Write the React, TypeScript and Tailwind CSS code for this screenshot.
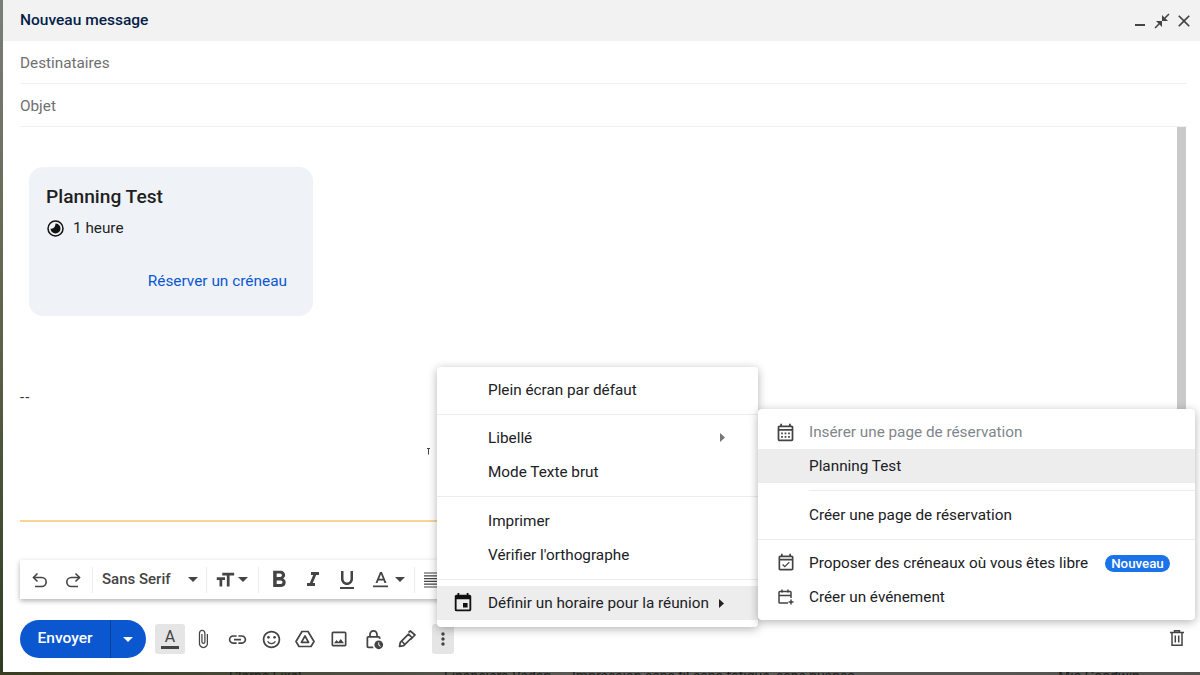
import {
  MdFormatSize, MdFormatBold, MdFormatItalic, MdFormatUnderlined,
  MdAttachFile, MdLink, MdOutlineSentimentSatisfied, MdOutlineImage, MdOutlineLockClock,
  MdMoreVert, MdEvent, MdOutlineCalendarMonth, MdOutlineEventAvailable,
  MdClose, MdCloseFullscreen,
} from 'react-icons/md'

const FONT = "font-['Roboto','Liberation_Sans',sans-serif]"

function Caret({ className = '' }: { className?: string }) {
  return (
    <svg width="10" height="5" viewBox="0 0 10 5" className={className}>
      <path d="M0 0h10L5 5z" fill="currentColor" />
    </svg>
  )
}

function Sep() {
  return <div className="w-px h-[26px] bg-[#ececec]" />
}

function UndoIcon({ flip = false, className = '' }: { flip?: boolean; className?: string }) {
  return (
    <svg width="18" height="18" viewBox="0 0 18 18" fill="none" stroke="#444" strokeWidth="1.600" className={`${flip ? '-scale-x-100' : ''} ${className}`}>
      <path d="M6.500 2.500L2.500 6.500l4 4" />
      <path d="M2.500 6.500h8.200a4.500 4.500 0 0 1 0 9H4" />
    </svg>
  )
}

function DriveIcon() {
  return (
    <svg width="20" height="20" viewBox="0 0 20 20" fill="none" stroke="#444" strokeWidth="1.700" strokeLinejoin="round">
      <path d="M7 2.500h6l6 10-3 5H4l-3-5z" />
      <path d="M10 7l3.600 6.300H6.400z" />
    </svg>
  )
}

function PenIcon() {
  return (
    <svg width="20" height="20" viewBox="0 0 20 20" fill="none" stroke="#444" strokeWidth="1.700" strokeLinejoin="round">
      <path d="M2.500 17.500l.8-4.200 8.200-8.200 3.400 3.400-8.200 8.200z" />
      <path d="M11.500 3.500l1.800-1.500 4.700 4-4.500 4.500" />
      <path d="M5 12.500l2.500 2.500" />
    </svg>
  )
}

function TrashIcon({ className = '' }: { className?: string }) {
  return (
    <svg width="14" height="16" viewBox="0 0 14 16" fill="none" stroke="#444" strokeWidth="1.500" className={className}>
      <path d="M0 2.500h14M4.500 2.500V.8h5v1.700" />
      <path d="M2 2.500v12.700h10V2.500" />
      <path d="M5.300 5.500v7M8.700 5.500v7" />
    </svg>
  )
}

function CalendarPlus() {
  return (
    <svg width="18" height="18" viewBox="0 0 18 18" fill="none" stroke="#444" strokeWidth="1.500">
      <path d="M11 15H2.800A.8.8 0 0 1 2 14.200V4.300a.8.8 0 0 1 .8-.8h10.400a.8.8 0 0 1 .8.8V10" />
      <path d="M2 7.500h12M5 1.500v3M11 1.500v3M14 11.500v5M11.500 14h5" />
    </svg>
  )
}

function ClockHalf() {
  return (
    <svg width="17" height="17" viewBox="0 0 17 17">
      <circle cx="8.500" cy="8.500" r="7.500" fill="none" stroke="#111" strokeWidth="1.500" />
      <path d="M8.500 3.500a5 5 0 1 1-5 5c2.500 1 5-1.500 5-5z" fill="#111" />
    </svg>
  )
}

function MenuRow({ icon, label, right, active = false, muted = false, iconClass = '' }: {
  icon?: React.ReactNode; label: string; right?: React.ReactNode; active?: boolean; muted?: boolean; iconClass?: string
}) {
  return (
    <div className={`h-[34px] flex items-center ${active ? 'bg-[#ededed]' : ''}`}>
      <div className={`w-[51px] flex justify-center shrink-0 ${iconClass}`}>{icon}</div>
      <span className={`text-[15.3px] whitespace-nowrap ${muted ? 'text-[#80868b]' : 'text-[#202124]'}`}>{label}</span>
      {right}
    </div>
  )
}

const TOOLS = [
  <MdAttachFile size={20} key="attach" />,
  <MdLink size={21} key="link" />,
  <MdOutlineSentimentSatisfied size={21} key="emoji" />,
  <DriveIcon key="drive" />,
  <MdOutlineImage size={20} key="image" />,
  <MdOutlineLockClock size={21} key="lock" />,
  <PenIcon key="pen" />,
]

export default function App() {
  return (
    <div className={`${FONT} relative w-[1200px] h-[675px] overflow-hidden bg-gradient-to-b from-[#7b7d7a] via-[#5f6248] to-[#2f3b26]`}>
      {/* inbox row behind the dialog: only the tops of the letters show, the words are placeholders */}
      <div className="absolute left-0 right-0 top-[672px] h-[3px] bg-gradient-to-r from-[#3a3d22] via-[#5b5a56] to-[#55534f] overflow-hidden text-[14px] leading-[14px] text-[#222]">
        <span className="absolute left-[229px] top-[-3px]">Clarne Fixel</span>
        <span className="absolute left-[444px] top-[-3px]">Financiera Vedan</span>
        <span className="absolute left-[572px] top-[-3px] whitespace-nowrap">Impression sans fil sans fatigue, sans nuance</span>
        <span className="absolute left-[1058px] top-[-3px]">Mia Goodwin</span>
      </div>

      <div className="ml-[3px] w-[1197px] h-[672px] bg-white rounded-tl-[8px] flex flex-col">
        <div className="h-[41px] bg-[#f2f2f2] flex items-center justify-between pl-[17px] pr-[6px] shrink-0">
          <span className="text-[15.500px] font-medium text-[#041e49]">Nouveau message</span>
          <div className="flex items-center text-[#444]">
            <div className="w-[10px] h-[2px] bg-[#444] mt-[8px]" />
            <MdCloseFullscreen size={18} className="ml-[8px]" />
            <MdClose size={20} className="ml-[3px]" />
          </div>
        </div>

        <div className="mx-[17px] mr-[13px] h-[43px] pt-[2px] border-b border-[#f0f0f0] flex items-center text-[15.300px] text-[#6f6f6f] shrink-0">Destinataires</div>
        <div className="mx-[17px] mr-[13px] h-[43px] pt-[2px] border-b border-[#f0f0f0] flex items-center text-[15.300px] text-[#6f6f6f] shrink-0">Objet</div>

        <div className="flex-1 flex min-h-0">
          <div className="flex-1 pl-[17px] min-w-0">
            <div className="ml-[9px] mt-[40px] w-[284px] h-[149px] rounded-[14px] bg-[#eff3f8] flex flex-col pl-[17px] pr-[26px] pt-[17px]">
              <div className="text-[19.200px] font-medium leading-[26px] text-[#1f1f1f]">Planning Test</div>
              <div className="flex items-center gap-[9px] mt-[8px] ml-px text-[15.300px] leading-[20px] text-[#1f1f1f]">
                <ClockHalf />
                <span>1 heure</span>
              </div>
              <div className="mt-[33px] text-right text-[15.400px] leading-[20px] text-[#0b57d0]">Réserver un créneau</div>
            </div>
            <div className="mt-[71px] text-[15px] leading-[20px] text-[#333] tracking-[1px]">--</div>
            <div className="mt-[113px] h-[2px] bg-[#f8d596] mr-[730px]" />
          </div>
          <div className="w-[9px] h-[282px] bg-[#c9c9c9] mr-[14px]" />
        </div>

        {/* text cursor left on the page */}
        <svg width="4" height="7" viewBox="0 0 4 7" className="absolute left-[427px] top-[448px]">
          <path d="M0 .5h3M1.500 .5v6" stroke="#444" strokeWidth="1" />
        </svg>

        {/* floating format bar */}
        <div className="absolute left-[20px] top-[560px] w-[430px] h-[39px] bg-white shadow-[0_2px_5px_rgba(0,0,0,0.3)] flex items-center text-[#444]">
          <UndoIcon className="ml-[11px]" />
          <UndoIcon flip className="ml-[15px]" />
          <div className="ml-[10px]"><Sep /></div>
          <span className="ml-[9px] text-[15px] font-medium text-[#444]">Sans Serif</span>
          <Caret className="ml-[17px]" />
          <div className="ml-[8px]"><Sep /></div>
          <MdFormatSize size={22} className="ml-[7px]" />
          <Caret className="ml-[2px]" />
          <div className="ml-[10px]"><Sep /></div>
          <MdFormatBold size={28} className="ml-[6px]" />
          <MdFormatItalic size={24} className="ml-[8px]" />
          <MdFormatUnderlined size={24} className="ml-[10px]" />
          <svg width="18" height="20" viewBox="0 0 18 20" className="ml-[13px]">
            <path d="M8 2h2l4.500 11h-2l-1-2.600H6.500L5.500 13h-2zM7.200 8.700h3.600L9 4.200z" fill="#444" />
            <rect x="1" y="15.500" width="15" height="1.700" fill="#444" />
          </svg>
          <Caret className="ml-[5px]" />
          <div className="ml-[9px]"><Sep /></div>
          <svg width="16" height="16" viewBox="0 0 16 16" className="ml-[9px]">
            <path d="M0 1h16M0 3.800h16M0 6.600h16M0 9.400h16M0 12.200h16M0 15h16" stroke="#444" strokeWidth="1.200" />
          </svg>
        </div>

        {/* send row */}
        <div className="absolute left-[20px] top-[620px] flex items-center">
          <div className="h-[38px] w-[126px] rounded-full bg-[#0b57d0] flex items-center text-white">
            <div className="w-[90px] text-center text-[15.500px] font-medium">Envoyer</div>
            <div className="w-px h-full bg-[#0a3f99]" />
            <Caret className="ml-[12px]" />
          </div>
          <div className="ml-[9px] w-[30px] h-[30px] rounded-[3px] bg-[#e5e5e5] flex flex-col items-center justify-center">
            <span className="text-[16px] leading-[16px] text-[#444]">A</span>
            <div className="w-[18px] h-[3px] bg-[#444] mt-px" />
          </div>
          <div className="ml-px flex items-center text-[#444]">
            {TOOLS.map(t => (
              <div key={t.key} className="w-[34px] flex justify-center">{t}</div>
            ))}
          </div>
          <div className="ml-[8px] w-[22px] h-[30px] rounded-[3px] bg-[#e5e5e5] flex items-center justify-center text-[#444]">
            <MdMoreVert size={20} />
          </div>
        </div>
        <TrashIcon className="absolute left-[1170px] top-[630px]" />
      </div>

      {/* main overflow menu */}
      <div className="absolute left-[437px] top-[367px] w-[321px] h-[260px] bg-white rounded-[4px] shadow-[0_2px_10px_rgba(0,0,0,0.3)] flex flex-col pt-[6px]">
        <MenuRow label="Plein écran par défaut" />
        <div className="h-px bg-[#ececec] mt-[7px] mb-[6px]" />
        <MenuRow label="Libellé" />
        <MenuRow label="Mode Texte brut" />
        <div className="h-px bg-[#ececec] mt-[7px] mb-[7px]" />
        <MenuRow label="Imprimer" />
        <MenuRow label="Vérifier l'orthographe" />
        <div className="h-px bg-[#ececec] mt-[7px] mb-[6px]" />
        <MenuRow active label="Définir un horaire pour la réunion" icon={<MdEvent size={22} className="text-[#111]" />}
          iconClass="pl-[1px]"
          right={<svg width="5" height="9" viewBox="0 0 5 9" className="ml-[10px]"><path d="M0 0l5 4.500L0 9z" fill="#222" /></svg>} />
        <svg width="5" height="9" viewBox="0 0 5 9" className="absolute left-[283px] top-[66px]"><path d="M0 0l5 4.500L0 9z" fill="#777" /></svg>
      </div>

      {/* booking submenu */}
      <div className="absolute left-[758px] top-[409px] w-[437px] h-[211px] bg-white rounded-[4px] shadow-[0_2px_10px_rgba(0,0,0,0.3)] flex flex-col pt-[6px]">
        <MenuRow muted label="Insérer une page de réservation" iconClass="pl-[4px]" icon={<MdOutlineCalendarMonth size={21} className="text-[#444]" />} />
        <MenuRow active label="Planning Test" />
        <div className="h-px bg-[#ececec] ml-[51px] mt-[7px] mb-[7px]" />
        <MenuRow label="Créer une page de réservation" />
        <div className="h-px bg-[#ececec] mt-[7px] mb-[6px]" />
        <MenuRow label="Proposer des créneaux où vous êtes libre" iconClass="pl-[4px]" icon={<MdOutlineEventAvailable size={20} className="text-[#444]" />}
          right={<span className="ml-[17px] h-[17px] px-[6px] rounded-full bg-[#1a73e8] text-white text-[13.300px] leading-[17px] font-medium">Nouveau</span>} />
        <MenuRow label="Créer un événement" iconClass="pl-[4px]" icon={<CalendarPlus />} />
      </div>
    </div>
  )
}
